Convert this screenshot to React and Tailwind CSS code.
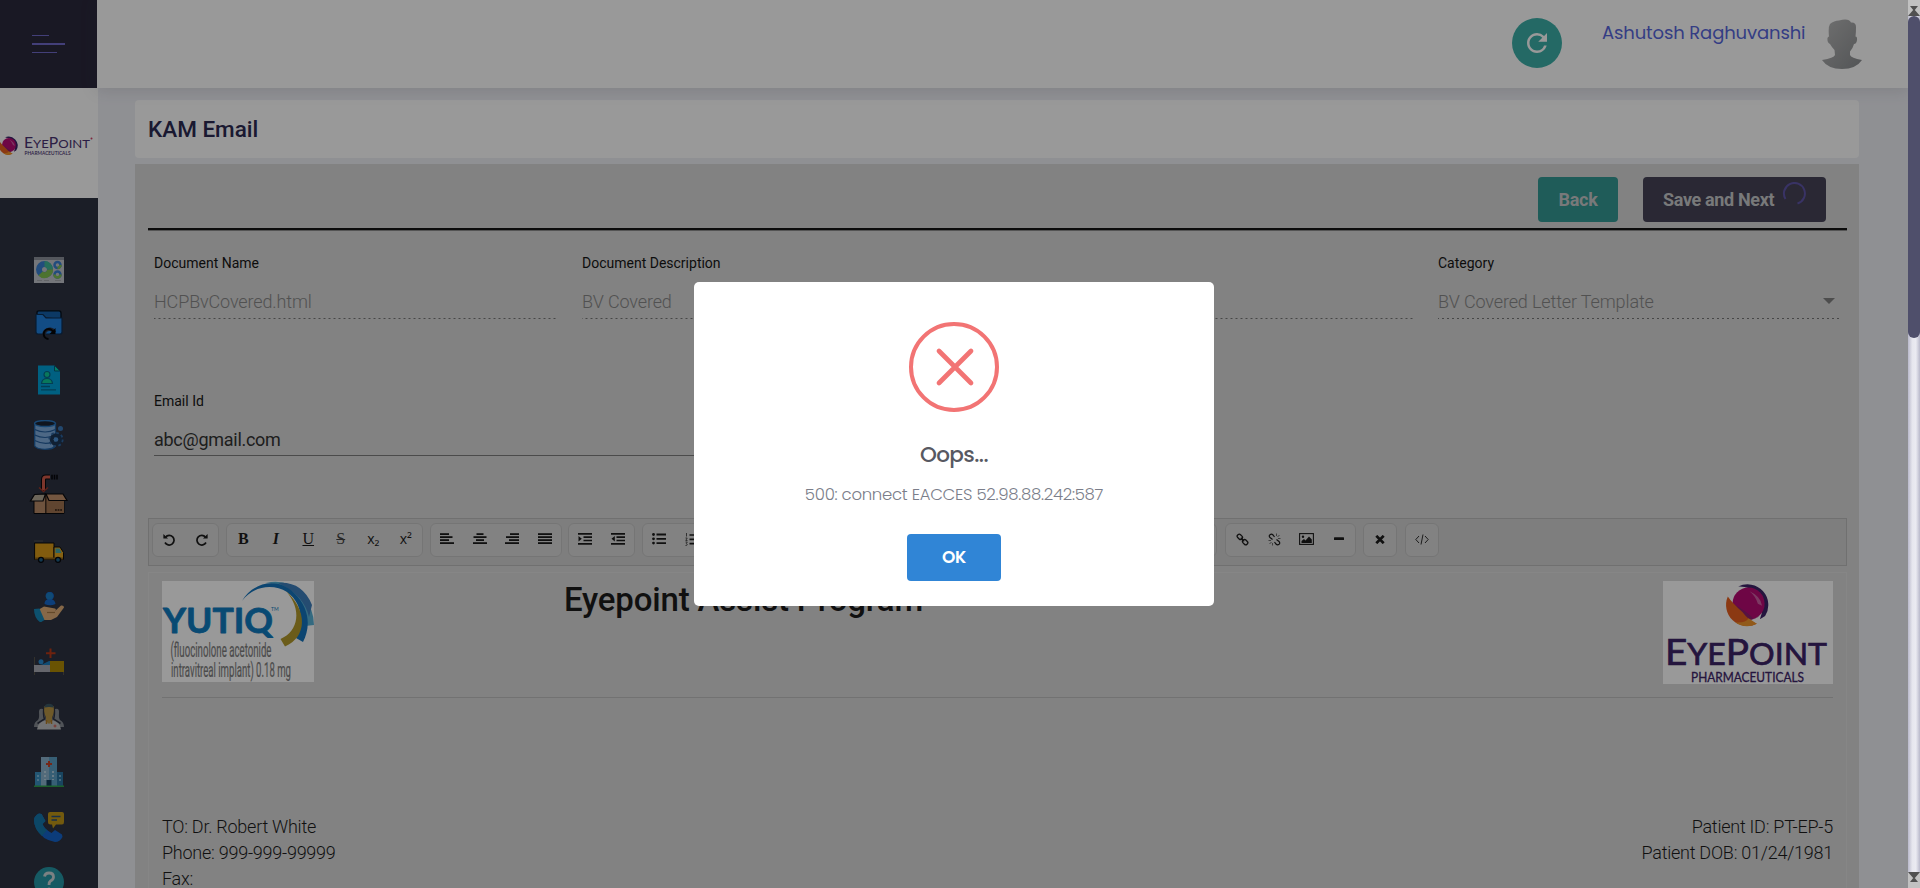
import React from "react";
import { MdRefresh } from "react-icons/md";

const ROBOTO = "font-['Roboto','Liberation_Sans',sans-serif]";
const POPPINS = "font-['Poppins','Lato','Liberation_Sans',sans-serif]";

/* ---------- logos ---------- */

function Globe({ cx, cy, r }) {
  return (
    <g transform={`translate(${cx} ${cy}) scale(${r / 20})`}>
      <path d="M-9 -17.5A20 20 0 0 1 17 11L12 14Q18 0 9 -11Q2 -18 -9 -17.5Z" fill="#3d2368" />
      <circle cx="1" cy="-1" r="15.5" fill="#b80a74" />
      <path d="M-14 -1Q2 8 6 14Q16 10 16.500 -1A15.500 15.500 0 0 1 1 14.500Z" fill="#8f1f6d" />
      <path d="M2 -13Q13 -8 14 1L10 -1Q8 -8 2 -13Z" fill="#cf5fa4" />
      <path d="M-19 -8A20.500 20.500 0 0 0 9 18.500Q2 16 -5 7Q-15 -2 -19 -8Z" fill="#e8601f" />
      <path d="M9 18.500A20.500 20.500 0 0 1 -12 17Q-2 18 1 13Z" fill="#f2972c" />
    </g>
  );
}

function EyePointWide() {
  return (
    <svg width="98" height="30" viewBox="0 0 98 30" className="block">
      <Globe cx={8.5} cy={12.5} r={9} />
      <g fill="#4a3272" fontFamily="Lato, sans-serif">
        <text x="24" y="15" textLength="66" lengthAdjust="spacingAndGlyphs" fontSize="14.5">
          E<tspan fontSize="12">YE</tspan>P<tspan fontSize="12">OINT</tspan>
        </text>
        <text x="24.500" y="22" fontSize="5" fontWeight="600" textLength="46" lengthAdjust="spacingAndGlyphs">PHARMACEUTICALS</text>
      </g>
      <circle cx="91.500" cy="5.500" r="1" fill="#d0406a" />
    </svg>
  );
}

function EyePointTall() {
  return (
    <svg width="170" height="103" viewBox="0 0 170 103" className="block bg-white">
      <Globe cx={84.5} cy={23.7} r={20.7} />
      <g fill="#3d2368" stroke="#3d2368" fontFamily="Lato, sans-serif">
        <text x="2" y="83.500" textLength="162" lengthAdjust="spacingAndGlyphs" fontSize="37.5" strokeWidth="0.7">
          E<tspan fontSize="31">YE</tspan>P<tspan fontSize="31">OINT</tspan>
        </text>
        <text x="28" y="100.500" fontSize="13" strokeWidth="0.3" textLength="113" lengthAdjust="spacingAndGlyphs">PHARMACEUTICALS</text>
      </g>
    </svg>
  );
}

function Yutiq() {
  return (
    <svg width="152" height="101" viewBox="0 0 152 101" className="block bg-white">
      <path d="M104 2Q126 -3 140 14Q152 28 152 44L143 45Q144 25 130 12Q118 2 104 2Z" fill="#58b1d6" />
      <path d="M116 2Q140 0 150 24L147 36Q142 14 116 2Z" fill="#3f7fbd" />
      <path d="M80 20C90 2 115 -5 132 12C149 28 148 48 141 61L134 57C142 40 140 22 125 11C112 3 92 4 80 20Z" fill="#1474bd" />
      <path d="M124 10C146 30 145 56 123 65.500L118.500 58C137 50 140 28 124 10Z" fill="#b39a2c" />
      <text x="1" y="51.500" fontFamily="Lato, sans-serif" fontWeight="700" fontSize="34" fill="#0f7cc0" stroke="#0f7cc0" strokeWidth="0.8" strokeLinejoin="round" textLength="110" lengthAdjust="spacingAndGlyphs">YUTIQ</text>
      <text x="109" y="30" fontFamily="Lato, sans-serif" fontSize="5" fill="#0f7cc0">TM</text>
      <g fontFamily="Roboto, sans-serif" fill="#7d7d7d" stroke="#7d7d7d" strokeWidth="0.2" fontSize="20.5">
        <text x="8.500" y="75.500" textLength="101" lengthAdjust="spacingAndGlyphs">(fluocinolone acetonide</text>
        <text x="9" y="96" textLength="120" lengthAdjust="spacingAndGlyphs">intravitreal implant) 0.18 mg</text>
      </g>
    </svg>
  );
}

/* ---------- sidebar icons ---------- */

const NAV = [
  <svg key="dash" width="30" height="30" viewBox="0 0 30 30">
    <rect y="2" width="30" height="26" fill="#c2c5cb" />
    <rect y="2" width="30" height="3" fill="#8d929b" />
    <circle cx="10.500" cy="14.500" r="5.500" fill="none" stroke="#3a7fd0" strokeWidth="6" />
    <path d="M10.500 9A5.500 5.500 0 0 1 16 14.500" fill="none" stroke="#42b797" strokeWidth="6" />
    <path d="M16 14.500A5.500 5.500 0 0 1 6.500 18.500" fill="none" stroke="#80c050" strokeWidth="6" />
    <circle cx="23.500" cy="10" r="3" fill="none" stroke="#3a7fd0" strokeWidth="2.500" />
    <path d="M23.500 13A3 3 0 0 0 26.500 10" fill="none" stroke="#80c050" strokeWidth="2.500" />
    <circle cx="23.500" cy="19.500" r="3" fill="none" stroke="#3a7fd0" strokeWidth="2.500" />
    <path d="M20.500 19.500A3 3 0 1 0 26.500 19.500" fill="none" stroke="#80c050" strokeWidth="2.500" />
    <path d="M3 25.500h5M10 25.500h5M21 25.500h6" stroke="#a5a8ae" strokeWidth="1" />
  </svg>,
  <svg key="folder" width="30" height="30" viewBox="0 0 30 30">
    <path d="M3 6V2.500Q3 .8 5 .8H25Q27 .8 27 3V9" fill="#1560a8" stroke="#06101c" strokeWidth="1.300" />
    <path d="M2 4.500H9L12 8H28V22Q28 24 26 24H4Q2 24 2 22Z" fill="#1f7fdc" stroke="#0c2f55" strokeWidth="1.200" />
    <path d="M14 30A5.500 5.500 0 1 1 20.500 22.500" fill="none" stroke="#2d3241" strokeWidth="3.500" />
    <path d="M14.500 29A5 5 0 1 1 19.500 22.500" fill="none" stroke="#050608" strokeWidth="1.900" />
    <path d="M21.500 18V24H15.500Z" fill="#050608" />
  </svg>,
  <svg key="profile" width="30" height="30" viewBox="0 0 30 30">
    <path d="M4 .5H20.500L26 6V29.500H4Z" fill="#00a0d8" />
    <path d="M20.500 .5L26 6H20.500Z" fill="#0bd0a8" stroke="#075a78" strokeWidth="1" />
    <circle cx="13" cy="9.500" r="3" fill="#10c898" stroke="#06688a" strokeWidth="1.200" />
    <path d="M7.500 18.500Q8 13.500 13 13.500Q18 13.500 18.500 18.500Z" fill="#10c898" stroke="#06688a" strokeWidth="1.200" />
    <path d="M7 21.500h9M7 24.800h15" stroke="#06688a" strokeWidth="1.300" />
  </svg>,
  <svg key="db" width="30" height="30" viewBox="0 0 30 30">
    <path d="M.7 3.500V26Q3 29.300 11 29.300Q19 29.300 21.500 26V3.500Z" fill="#80aede" stroke="#2164a8" strokeWidth="1.300" />
    <ellipse cx="11" cy="3.500" rx="10.400" ry="3" fill="#1b2433" stroke="#2a78c2" strokeWidth="1.300" />
    <path d="M.7 9.500Q11 14.500 21.500 9.500M.7 15Q11 20 21.500 15M.7 20.500Q11 25.500 18 22" fill="none" stroke="#255f9e" strokeWidth="1.200" />
    <circle cx="22" cy="19.500" r="4.300" fill="none" stroke="#1c3656" strokeWidth="4" />
    <circle cx="22" cy="19.500" r="6.700" fill="none" stroke="#2d649e" strokeWidth="1.800" strokeDasharray="2.800 2.460" />
    <circle cx="22" cy="19.500" r="2.300" fill="#4b90d4" />
    <circle cx="26.500" cy="8.500" r="2.500" fill="#3a78b8" />
  </svg>,
  <svg key="box" width="40" height="40" viewBox="0 0 40 40">
    <path d="M14.500 17V5.500Q14.500 3 17 3H21" fill="none" stroke="#08090d" strokeWidth="5" />
    <path d="M14.500 16V5.500Q14.500 3 17 3H21" fill="none" stroke="#d05a4a" strokeWidth="3" />
    <path d="M10 13.500L14.500 17.500L19 13.500" fill="none" stroke="#9b382c" strokeWidth="1.500" />
    <path d="M23 .8v4.800M25.500 .8v4.800M28 .8v4.800" stroke="#050609" strokeWidth="1.500" />
    <path d="M5 22H35V39.500H5Z" fill="#b88a68" stroke="#08090d" strokeWidth="1" />
    <path d="M17 22H35V39H17Z" fill="#a07350" />
    <path d="M5.500 20.500L16.500 20L14 27H1.500Z" fill="#b5a895" stroke="#08090d" strokeWidth="1.200" />
    <path d="M17 20H34L38 26.500H20Z" fill="#c08f6c" stroke="#08090d" strokeWidth="1.200" />
    <path d="M16.800 21V39" stroke="#251811" strokeWidth="1.200" />
    <path d="M26 36h7" stroke="#4a3222" strokeWidth="1.800" strokeDasharray="1.800 .8" />
  </svg>,
  <svg key="truck" width="30" height="30" viewBox="0 0 30 30">
    <path d="M0 4h9" stroke="#4c4e52" strokeWidth="1.200" />
    <path d="M.6 6H20V22.500H.6Z" fill="#d99a18" stroke="#0a0b0e" strokeWidth="1" />
    <path d="M20 10H26L29.500 15.500V22.500H20Z" fill="#e0a420" stroke="#0a0b0e" strokeWidth="1" />
    <path d="M21.500 11.500H25.500L27.500 16H21.500Z" fill="#49a5a8" />
    <path d="M1 21.500H29" stroke="#8a6114" strokeWidth="2" />
    <circle cx="7" cy="22.800" r="2.500" fill="#1d5f88" stroke="#07080b" strokeWidth="1.300" />
    <circle cx="24" cy="22.800" r="2.500" fill="#1d5f88" stroke="#07080b" strokeWidth="1.300" />
  </svg>,
  <svg key="care" width="30" height="30" viewBox="0 0 30 30">
    <path d="M10.500 12Q10.500 8 13.500 7.500A4.200 4.200 0 1 1 18 7.500Q21 8 21.500 12Q16 14.500 10.500 12Z" fill="#1468cc" />
    <circle cx="15.500" cy="4" r="3.500" fill="#1c7dc4" />
    <path d="M4 18L10 14.500L21 16.500Q23 17.500 20.500 19.500L27 13.500Q30 13 30 15.500L23 25L17 28H8Z" fill="#dfae78" />
    <path d="M13 20.500H21" stroke="#a67845" strokeWidth="1.200" />
    <path d="M0 17L5.500 16.500L10.500 28L6.500 30.500Q0 26 0 17Z" fill="#1687b8" />
  </svg>,
  <svg key="bed" width="30" height="30" viewBox="0 0 30 30">
    <path d="M16.500 1.500V11M12 6.200H21.500" stroke="#b83a18" strokeWidth="2" />
    <path d="M.5 10V28M29.500 16V28" stroke="#55524a" strokeWidth="1" />
    <rect y="18" width="16" height="7" fill="#a9aab4" />
    <path d="M8 17.500L15 14H17V18H6Z" fill="#1f7fc0" />
    <circle cx="7" cy="14.800" r="2.500" fill="#2a8bd0" />
    <rect x="16" y="14" width="14" height="11" fill="#b08a05" />
  </svg>,
  <svg key="staff" width="30" height="30" viewBox="0 0 30 30">
    <path d="M9 7Q4.500 5.500 5 11Q5.500 16 4 18Q0 20 0 25H8L12 18Z" fill="#858a92" />
    <path d="M21 7Q25.500 5.500 25 11Q24.500 16 26 18Q30 20 30 25H22L18 18Z" fill="#858a92" />
    <path d="M9.800 6Q9 13 10.500 17L3.500 21.500M20.200 6Q21 13 19.500 17L26.500 21.500" fill="none" stroke="#2d3241" strokeWidth="1.500" />
    <path d="M3 27.500Q4 20 11 18.500H19Q26 20 27 27.500Z" fill="#bfc0c2" />
    <path d="M10.500 4H19.500Q20.500 10 19 13L18 16V19L15 22L12 19V16L11 13Q9.500 10 10.500 4Z" fill="#b89445" />
    <path d="M10.500 5.500Q10.500 1.800 15 1.800Q19.500 1.800 19.500 5.500Q15 4.500 10.500 5.500Z" fill="#3c5964" />
    <path d="M12.500 18V22M17.500 18V22" stroke="#b07a28" strokeWidth="1.500" />
    <path d="M21 22.500v3M19.500 24h3" stroke="#d05548" strokeWidth="1" />
  </svg>,
  <svg key="hospital" width="30" height="30" viewBox="0 0 30 30">
    <rect x="1" y="15" width="7" height="14" fill="#3b8fc0" />
    <rect x="22" y="15" width="7" height="14" fill="#2873a0" />
    <rect x="7" y="0" width="8" height="29" fill="#8bb3ce" />
    <rect x="15" y="0" width="8" height="29" fill="#5c9fc4" />
    <path d="M15 4v6M12 7h6" stroke="#c24128" strokeWidth="2" />
    <path d="M11 14v9M19 14v9" stroke="#c7dde8" strokeWidth="1.500" strokeDasharray="2 2" />
    <path d="M4 18v8M26 18v8" stroke="#a0d0e8" strokeWidth="1.300" strokeDasharray="2 2" />
    <rect x="12.500" y="23" width="5" height="6" fill="#133c5c" />
    <rect y="28.500" width="30" height="1.500" fill="#2fa04a" />
  </svg>,
  <svg key="call" width="30" height="30" viewBox="0 0 30 30">
    <path d="M0 8Q0 4 5 1.500L7.500 2L11.500 9L8.500 12Q10 16.500 17.500 21L21 18L28 22.500L28.500 25Q26 30 21 30Q8 28 2 16Q0 12 0 8Z" fill="#1464cc" />
    <path d="M0 8Q0 4 5 1.500L7.500 2L11.500 9L8.500 12Q9.500 16 13 18L8 24Q0 17 0 8Z" fill="#1477aa" />
    <path d="M16 0H28Q30 0 30 2V10Q30 12.500 28 12.500H22L19 16.500L18 12.500H16.500Q14 12.500 14 10V2Q14 0 16 0Z" fill="#c09618" />
    <path d="M17.500 4.500H26.500M17.500 8H23" stroke="#284f7a" strokeWidth="1.300" />
  </svg>,
  <svg key="help" width="30" height="30" viewBox="0 0 30 30">
    <circle cx="15" cy="15" r="15" fill="#2597a5" />
    <path d="M10.500 9.500Q11 6 15 6Q19.500 6 19.500 10Q19.500 12.500 16.500 14Q15 15 15 18" fill="none" stroke="#cdd8da" strokeWidth="2.800" />
    <circle cx="15" cy="22" r="1.500" fill="#cdd8da" />
  </svg>,
];

/* ---------- toolbar icons ---------- */

function Lines({ rows }) {
  return (
    <svg width="14" height="12" viewBox="0 0 14 12" className="block">
      {rows.map(([x, w], i) => (
        <rect key={i} x={x} y={i * 3 + 0.2} width={w} height="1.800" fill="currentColor" />
      ))}
    </svg>
  );
}

const turn = (
  <>
    <path d="M2.500 4.200A4.800 4.800 0 1 1 2 9.500" fill="none" stroke="currentColor" strokeWidth="1.700" />
    <path d="M.4 1V5.600H5Z" fill="currentColor" />
  </>
);
const Undo = () => <svg width="12" height="13" viewBox="0 0 12 13">{turn}</svg>;
const Redo = () => <svg width="12" height="13" viewBox="0 0 12 13" className="-scale-x-100">{turn}</svg>;
const dentLines = (
  <path d="M0 .9H14M5.500 4.200H14M5.500 7.500H14M0 10.800H14" stroke="currentColor" strokeWidth="1.700" />
);
const Indent = () => <svg width="14" height="12" viewBox="0 0 14 12">{dentLines}<path d="M.5 3V8.500L3.800 5.800Z" fill="currentColor" /></svg>;
const Outdent = () => <svg width="14" height="12" viewBox="0 0 14 12">{dentLines}<path d="M3.800 3V8.500L.5 5.800Z" fill="currentColor" /></svg>;
const Bullets = () => (
  <svg width="14" height="12" viewBox="0 0 14 12">
    <path d="M4.500 1.500H14M4.500 5.800H14M4.500 10.100H14" stroke="currentColor" strokeWidth="1.800" />
    <circle cx="1.500" cy="1.500" r="1.400" fill="currentColor" /><circle cx="1.500" cy="5.800" r="1.400" fill="currentColor" /><circle cx="1.500" cy="10.100" r="1.400" fill="currentColor" />
  </svg>
);
const Numbers = () => (
  <svg width="14" height="13" viewBox="0 0 14 13">
    <path d="M4.500 2H14M4.500 6.300H14M4.500 10.600H14" stroke="currentColor" strokeWidth="1.700" />
    <path d="M1.500 0V3.500M.5 5H2.200L.8 7.500H2.500M.5 9H2.300L1.300 10.500Q3 11 1.800 12.300L.5 12.500" fill="none" stroke="currentColor" strokeWidth=".7" />
  </svg>
);
const Chain = () => (
  <svg width="13" height="13" viewBox="0 0 13 13" fill="none" stroke="currentColor" strokeWidth="1.300">
    <rect x="-2.600" y="-2" width="5.600" height="4" rx="1.800" transform="translate(3.700 3.700) rotate(45)" />
    <rect x="-3" y="-2" width="5.600" height="4" rx="1.800" transform="translate(9.300 9.300) rotate(45)" />
    <path d="M4.800 4.800L8.200 8.200" />
  </svg>
);
const Unchain = () => (
  <svg width="13" height="13" viewBox="0 0 13 13" fill="none" stroke="currentColor" strokeWidth="1.200">
    <path d="M4.500 6.500L2 4.500Q.5 3 2 1.800Q3.500 .5 5 2L6.500 4M8.500 6.500L11 8.500Q12.500 10 11 11.300Q9.500 12.500 8 11L6.500 9" />
    <path d="M8.500 3V.5M9.500 4L11.500 2M10 5.500H12.500M4.500 10V12.500M3.500 9L1.500 11M3 7.500H.5" strokeWidth=".6" />
  </svg>
);
const Picture = () => (
  <svg width="15" height="12" viewBox="0 0 15 12">
    <rect x=".6" y=".6" width="13.800" height="10.800" fill="none" stroke="currentColor" strokeWidth="1.100" />
    <circle cx="4" cy="3.800" r="1.200" fill="currentColor" />
    <path d="M2.500 10V8L5 6L6.500 7.500L10 3.500L12.800 6.500V10Z" fill="currentColor" />
  </svg>
);
const Minus = () => <svg width="10" height="12" viewBox="0 0 10 12"><rect y="4.300" width="10" height="2.800" rx=".5" fill="currentColor" /></svg>;
const Cross = () => <svg width="10" height="9" viewBox="0 0 10 9"><path d="M1.300 .8L8.700 8.200M8.700 .8L1.300 8.200" stroke="currentColor" strokeWidth="2.700" /></svg>;
const Code = () => (
  <svg width="14" height="11" viewBox="0 0 14 11" fill="none" stroke="currentColor" strokeWidth=".9">
    <path d="M4 2L.8 5.500L4 9M10 2L13.200 5.500L10 9M8 .5L6 10.500" />
  </svg>
);
const serif = "font-['Liberation_Serif',serif] text-[16px] leading-5";
const sans = "font-['Open_Sans',sans-serif] text-[14px] leading-5";

function Group({ className, children }) {
  return (
    <div className={`flex h-[34px] shrink-0 items-center rounded-md border border-[#c4c4c4] bg-[#d9d9d9] ${className}`}>
      {React.Children.map(children, (c) => (
        <div className="flex flex-1 items-center justify-center pb-0.5">{c}</div>
      ))}
    </div>
  );
}

function Toolbar() {
  return (
    <div className="flex h-12 w-[1699px] border border-[#bbbbbb] bg-[#d2d2d2] pl-[3px] pt-1 text-[#1c1c1c]">
      <Group className="w-[67px]"><Undo /><Redo /></Group>
      <Group className="ml-[7px] w-[197px]">
        <span className={`${serif} font-bold`}>B</span>
        <span className={`${serif} font-bold italic`}>I</span>
        <span className={`${serif} underline`}>U</span>
        <span className={`${serif} line-through opacity-80`}>S</span>
        <span className={sans}>x₂</span>
        <span className={sans}>x²</span>
      </Group>
      <Group className="ml-[7px] w-[132px]">
        <Lines rows={[[0, 9], [0, 12.5], [0, 9], [0, 14]]} />
        <Lines rows={[[3.5, 7], [0.5, 13], [3, 8], [0, 14]]} />
        <Lines rows={[[5, 9], [1, 13], [4, 10], [0, 14]]} />
        <Lines rows={[[0, 14], [0, 14], [0, 14], [0, 14]]} />
      </Group>
      <Group className="ml-[6px] w-[67px]"><Indent /><Outdent /></Group>
      <Group className="ml-[7px] w-[67px]"><Bullets /><Numbers /></Group>
      <Group className="ml-[7px] w-[501px]" />
      <Group className="ml-[8px] w-[131px]"><Chain /><Unchain /><Picture /><Minus /></Group>
      <Group className="ml-[7px] w-[34px]"><Cross /></Group>
      <Group className="ml-[8px] w-[34px]"><Code /></Group>
    </div>
  );
}

/* ---------- form ---------- */

const dotted =
  "bg-[linear-gradient(to_right,#777_0,#777_40%,transparent_40%)] bg-[length:5px_1px] bg-repeat-x bg-bottom";

function Field({ label, value, className, caret }) {
  return (
    <div className={`flex shrink-0 flex-col ${className}`}>
      <div className="h-5 text-[14px] leading-5 text-[#161616]">{label}</div>
      <div className={`mt-3 flex h-[34px] items-center justify-between pb-0.5 text-[18px] font-light tracking-[-0.13px] text-[#888888] ${dotted}`}>
        <span>{value}</span>
        {caret && <span className="mr-[6px] border-x-[6px] border-t-[6px] border-x-transparent border-t-[#808080]" />}
      </div>
    </div>
  );
}

function Header() {
  return (
    <header className="relative flex h-[88px] shrink-0">
      <div className="flex w-[97px] flex-col bg-[#2b283c] pl-8 pt-[35px]">
        <i className="h-px w-[17px] bg-[#716aca]" />
        <i className="mt-[7px] h-[2px] w-[33px] bg-[#716aca]" />
        <i className="mt-[7px] h-px w-[25px] bg-[#716aca]" />
      </div>
      <div className="flex flex-1 items-start justify-end bg-white pr-[46px] pt-[18px] shadow-[0_1px_15px_1px_rgba(69,65,78,0.15)]">
        <div className="flex size-[50px] items-center justify-center rounded-full bg-[#3cb0a8] text-white">
          <MdRefresh size={30} />
        </div>
        <div className={`ml-10 mt-px w-[202px] whitespace-nowrap text-[18px] leading-7 tracking-[-0.12px] text-[#5867dd] ${POPPINS}`}>
          Ashutosh Raghuvanshi
        </div>
        <svg width="40" height="50" viewBox="0 0 40 50" className="ml-[18px] mt-px">
          <defs>
            <linearGradient id="face" x1="0" y1="0" x2="1" y2="1">
              <stop offset="0" stopColor="#bababa" />
              <stop offset="1" stopColor="#8a8d90" />
            </linearGradient>
          </defs>
          <path fill="url(#face)" d="M0 41Q12 39 13 36L12.500 31Q9 27 8 25Q5 24 5.500 19Q6 17.500 7 17.500Q6 8 8 5Q12 1.500 17 1.500Q27 -1 29 3.500Q34 3 34 8Q34 14 33.500 17.500Q35.500 17.500 35 21Q34.500 25 32 25Q31 29 28 32.500L28 36Q29 39 40 41Q34 50 20 50Q6 50 0 41Z" />
        </svg>
      </div>
    </header>
  );
}

function Modal() {
  return (
    <div className={`flex h-[324px] w-[520px] flex-col items-center rounded-[5px] bg-white pt-10 ${POPPINS}`}>
      <svg width="90" height="90" viewBox="0 0 90 90" className="shrink-0">
        <circle cx="45" cy="45" r="43" fill="none" stroke="#f27474" strokeWidth="4" />
        <path d="M30 29L62 61M62 29L30 61" stroke="#f27474" strokeWidth="4.700" strokeLinecap="round" />
      </svg>
      <div className="mt-[26px] h-[34px] text-[21.5px] font-medium leading-[34px] tracking-[-0.6px] text-[#575962]">Oops...</div>
      <div className="mt-[9px] h-7 whitespace-nowrap text-[16.5px] font-light leading-7 tracking-[-0.28px] text-[#7b7e8a]">
        500: connect EACCES 52.98.88.242:587
      </div>
      <button className="mt-[25px] h-[47px] w-[94px] rounded-[4px] bg-[#3085d6] text-[17px] font-semibold tracking-[-0.2px] text-white">OK</button>
    </div>
  );
}

function ScrollBar() {
  return (
    <div className="flex h-full w-3 shrink-0 flex-col bg-[#c1c1c1]">
      <svg width="12" height="16" viewBox="0 0 12 16" className="block shrink-0">
        <path d="M2 6H10L6 11ZM6 9L12 16H0Z" fill="#505050" />
      </svg>
      <div className="flex-1 bg-[linear-gradient(to_right,#b9b9cb,#e6e6ee_35%,#ebebf2_65%,#b9b9cb)]">
        <div className="h-[322px] rounded-full bg-[#4f4f6b]" />
      </div>
      <svg width="12" height="16" viewBox="0 0 12 16" className="block shrink-0">
        <path d="M0 0H12L6 7ZM6 5L10 10H2Z" fill="#505050" />
      </svg>
    </div>
  );
}

export default function App() {
  return (
    <div className={`flex h-[888px] w-[1920px] overflow-hidden ${ROBOTO}`}>
      <div className="relative flex h-full w-[1908px] flex-col overflow-hidden bg-[#eff0f6]">
        <Header />
        <div className="flex h-[800px]">
          <aside className="flex w-[98px] shrink-0 flex-col bg-[#2d3241]">
            <div className="h-[110px] shrink-0 bg-white pt-[45px]">
              <EyePointWide />
            </div>
            <nav className="flex shrink-0 flex-col pt-[44.5px]">
              {NAV.map((icon) => (
                <div key={icon.key} className={`flex items-center justify-center ${icon.key === "box" ? "h-[62px]" : "h-[55px]"}`}>
                  {icon}
                </div>
              ))}
            </nav>
          </aside>

          <main className="ml-[37px] w-[1724px] pt-3">
            <h1 className="flex h-[58px] items-center rounded-[4px] bg-white pl-[13px] pt-px text-[22.5px] font-medium text-[#2c2a52]">KAM Email</h1>
            <section className="mt-1.5 flex h-[800px] flex-col bg-[#d9d9d9] px-[13px] pt-[13px]">
              <div className="flex shrink-0 justify-end pr-5 text-[18px] font-bold text-[#c8cacb]">
                <div className="flex h-[45px] w-20 items-center justify-center rounded-[4px] bg-[#349994] tracking-[-0.3px]">Back</div>
                <div className="ml-[25px] flex h-[45px] w-[183px] items-center rounded-[4px] bg-[#464357] pl-5">
                  <span className="whitespace-nowrap tracking-[-0.35px]">Save and Next</span>
                  <svg width="24" height="24" viewBox="0 0 24 24" className="-mt-3 ml-2 shrink-0">
                    <path d="M3.500 17A10.500 10.500 0 1 1 15.500 21.500" fill="none" stroke="#5f55a8" strokeWidth="2" />
                  </svg>
                </div>
              </div>
              <div className="mt-1.5 h-[3px] w-[1699px] shrink-0 border-b border-[#8c8c8c] bg-[#141414]" />
              <div className="mt-[22px] flex shrink-0 gap-6 pl-1.5">
                <Field label="Document Name" value="HCPBvCovered.html" className="w-[404px]" />
                <Field label="Document Description" value="BV Covered" className="w-[832px]" />
                <Field label="Category" value="BV Covered Letter Template" className="w-[403px]" caret />
              </div>
              <div className="mt-[72px] w-[830px] shrink-0 pl-1.5">
                <div className="h-5 text-[14px] leading-5 text-[#161616]">Email Id</div>
                <div className="mt-3 flex h-[33px] items-center border-b border-[#7d7d7d] text-[18px] tracking-[-0.27px] text-[#333333]">abc@gmail.com</div>
              </div>
              <div className="mt-[62px] shrink-0">
                <Toolbar />
              </div>
              <article className="mt-1.5 h-[340px] w-[1699px] shrink-0 border border-[#dfdfdf] px-[13px] pt-2 text-[#1c1c1c]">
                <div className="flex h-[117px] items-start border-b border-[#bebebe]">
                  <Yutiq />
                  <h2 className="ml-[250px] mt-px whitespace-nowrap text-[33px] font-medium leading-9 tracking-[-0.17px]">Eyepoint Assist Program</h2>
                  <div className="ml-auto">
                    <EyePointTall />
                  </div>
                </div>
                <div className="mt-[116px] flex justify-between text-[18px] font-light leading-[26px] tracking-[-0.25px]">
                  <div>
                    <div>TO: Dr. Robert White</div>
                    <div>Phone: 999-999-99999</div>
                    <div>Fax:</div>
                  </div>
                  <div className="text-right">
                    <div>Patient ID: PT-EP-5</div>
                    <div>Patient DOB: 01/24/1981</div>
                  </div>
                </div>
              </article>
            </section>
          </main>
        </div>

        <div className="absolute inset-0 flex items-center justify-center bg-black/40">
          <Modal />
        </div>
      </div>
      <ScrollBar />
    </div>
  );
}
